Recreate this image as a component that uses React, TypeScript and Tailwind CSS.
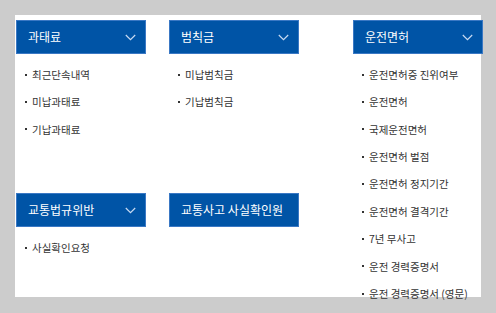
const FONT = { fontFamily: '"Noto Sans CJK KR", "Noto Sans", sans-serif' };

function Chevron() {
  return (
    <svg width="11" height="7" viewBox="0 0 11 7" className="shrink-0">
      <polyline points="0.8,1 5.5,5.6 10.2,1" fill="none" stroke="#c9dbf2" strokeWidth="1.2" />
    </svg>
  );
}

function Header({ title, arrow = true }: { title: string; arrow?: boolean }) {
  return (
    <div className="flex h-[34px] w-[130px] items-center justify-between border border-[#3a78c4] bg-[#0054a6] pl-[11px] pr-[9px]">
      <span className="whitespace-nowrap text-[12px] text-white">{title}</span>
      {arrow && <Chevron />}
    </div>
  );
}

function Menu({ title, items, arrow = true }: { title: string; items: string[]; arrow?: boolean }) {
  return (
    <div className="w-[130px]">
      <Header title={title} arrow={arrow} />
      <ul className="pt-[7px]">
        {items.map((it) => (
          <li key={it} className="flex h-[27.4px] items-center gap-[5px] pl-[9px] text-[10.5px] text-[#333]">
            <span className="h-[2px] w-[2px] bg-[#333]" />
            <span className="whitespace-nowrap">{it}</span>
          </li>
        ))}
      </ul>
    </div>
  );
}

export default function App() {
  return (
    <div className="h-[313px] w-[496px] bg-[#cccccc] pl-[15px] pt-[15px]" style={FONT}>
      <div className="flex h-[282px] w-[466px] bg-white pl-[1px] pt-[5px]">
        <div className="grid grid-cols-[130px_130px] grid-rows-[173px_auto] gap-x-[23px]">
          <Menu title="과태료" items={["최근단속내역", "미납과태료", "기납과태료"]} />
          <Menu title="범칙금" items={["미납범칙금", "기납범칙금"]} />
          <Menu title="교통법규위반" items={["사실확인요청"]} />
          <Menu title="교통사고 사실확인원" items={[]} arrow={false} />
        </div>
        <div className="ml-[54px]">
          <Menu
            title="운전면허"
            items={[
              "운전면허증 진위여부",
              "운전면허",
              "국제운전면허",
              "운전면허 벌점",
              "운전면허 정지기간",
              "운전면허 결격기간",
              "7년 무사고",
              "운전 경력증명서",
              "운전 경력증명서 (영문)",
            ]}
          />
        </div>
      </div>
    </div>
  );
}
